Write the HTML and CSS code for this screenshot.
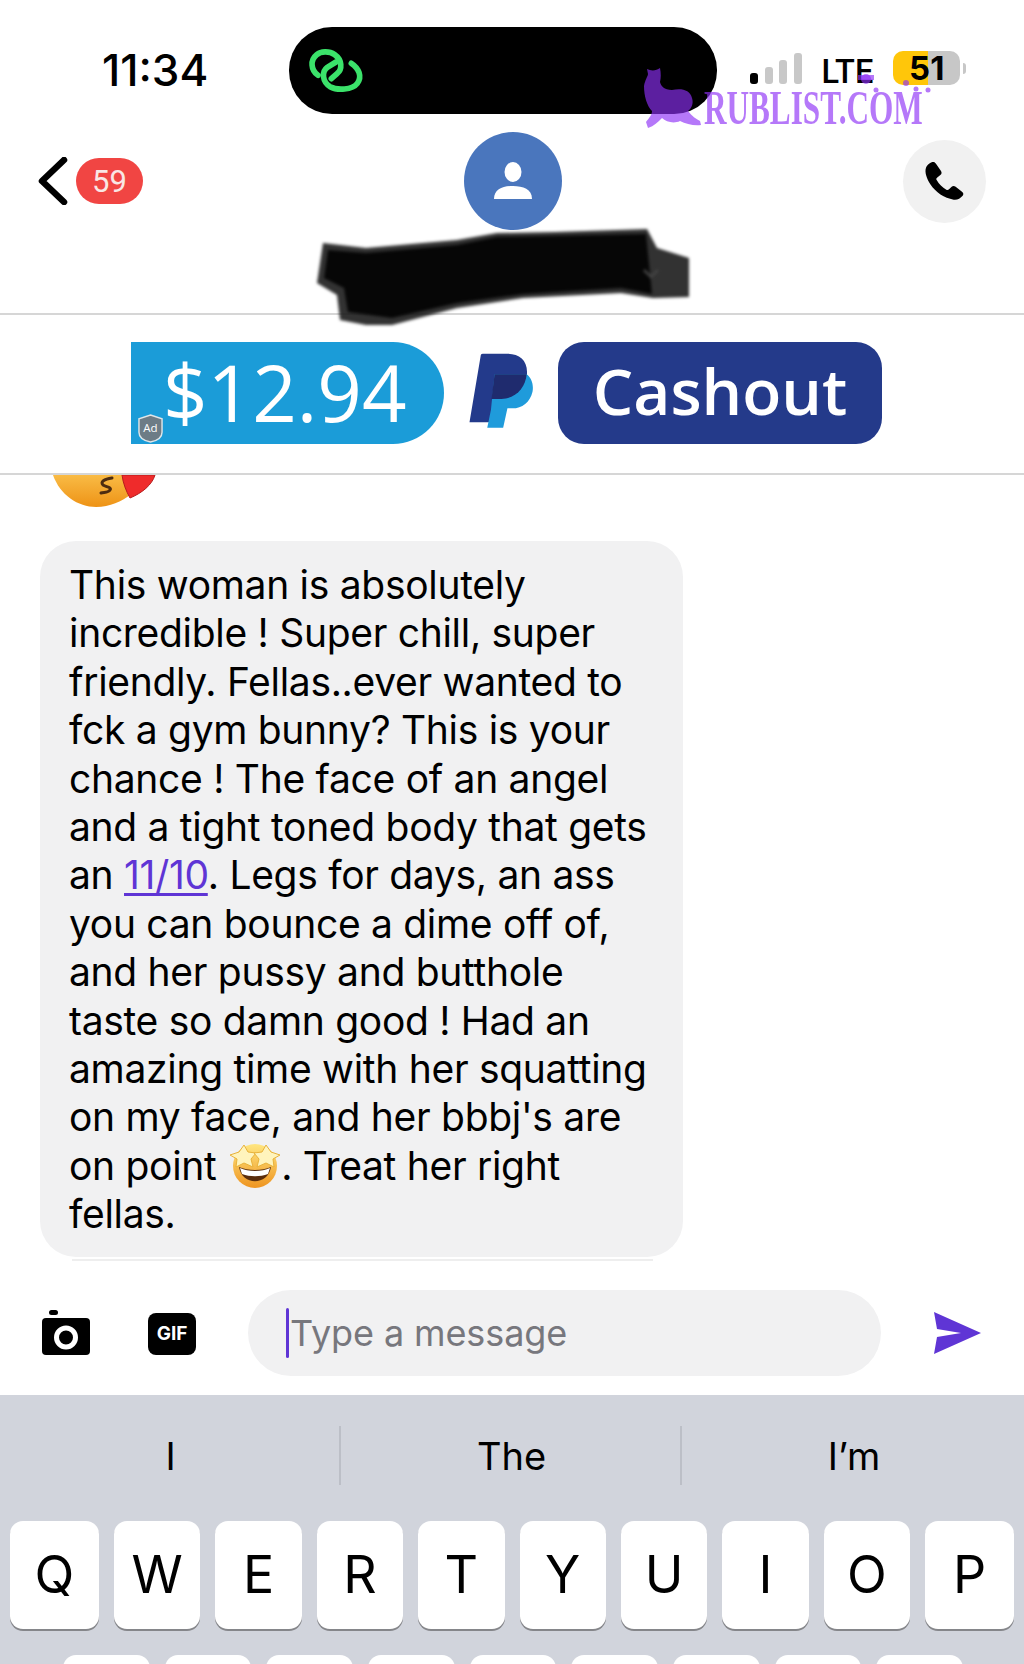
FILE: index.html
```html
<!DOCTYPE html>
<html lang="en">
<head>
    <meta charset="UTF-8">
    <title>Messages</title>
    <link rel="stylesheet" href="styles.css">
</head>
<body>
    <div class="phone">
        <div class="status">
            <div class="time">11:34</div>
            <div class="island">
                <svg class="island-logo" viewBox="0 0 240 180" fill="none" stroke="#3be26a" stroke-width="17" stroke-linecap="round">
                    <path d="M72 106C50 90 48 60 68 44 80 34 105 32 122 44 145 60 145 88 130 100L112 116"/>
                    <path d="M172 70C195 85 205 110 190 130 175 150 130 152 108 140 85 125 82 95 100 82L126 66"/>
                </svg>
            </div>
            <div class="status-right">
                <div class="signal">
                    <span class="bar bar-1"></span>
                    <span class="bar bar-2"></span>
                    <span class="bar bar-3"></span>
                    <span class="bar bar-4"></span>
                </div>
                <div class="lte">LTE</div>
                <div class="battery"><span>51</span></div>
                <div class="battery-nub"></div>
            </div>
        </div>

        <div class="contact">
            <div class="contact-row">
                <div class="back">
                    <svg class="chevron" viewBox="0 0 30 48" fill="none" stroke="#000" stroke-width="6.500" stroke-linecap="round" stroke-linejoin="round">
                        <path d="M26 3 4 24l22 21"/>
                    </svg>
                    <span class="badge">59</span>
                </div>
                <div class="avatar">
                    <svg viewBox="0 0 38 38" width="38" height="38" fill="#fff">
                        <ellipse cx="19" cy="10" rx="8.5" ry="10"/>
                        <path d="M0 37C0 27 9 24 19 24S38 27 38 37Z"/>
                    </svg>
                </div>
                <div class="call">
                    <svg viewBox="0 0 180 156" width="60" height="52" fill="#000">
                        <path d="M33 38C37 28 48 20 56 21 60 22 62 25 64 28L78 48C81 53 80 57 76 60L66 68C64 70 63 72 65 75 72 88 82 97 94 104 97 106 100 105 102 103L110 95C113 92 118 92 122 95L141 110C146 114 146 118 143 122 136 130 126 136 116 134 88 130 62 112 46 88 36 72 28 52 33 38Z"/>
                    </svg>
                </div>
            </div>
        </div>

        <div class="ad">
            <div class="ad-amount">
                $12.94
                <svg class="ad-shield" viewBox="0 0 26 30">
                    <path d="M13 1 25 5V19C25 25 19 28 13 29 7 28 1 25 1 19V5Z" fill="#6d7c86" stroke="#dfe5e8" stroke-width="1.5"/>
                    <text x="13" y="19" text-anchor="middle" class="ad-shield-text">Ad</text>
                </svg>
            </div>
            <svg class="paypal" viewBox="0 0 255 270" preserveAspectRatio="none">
                <path fill="#233a8b" d="M55 30Q56 26 62 26H140C180 26 208 45 206 85 203 130 170 160 122 162H104L88 232H18Z"/>
                <path fill="#1f9bdb" d="M100 88H205C222 100 228 120 224 140 216 172 190 190 158 190H142L128 248H76L88 195Z"/>
                <path fill="#1f2b6e" d="M100 88H205C200 130 170 160 122 162H90Z"/>
            </svg>
            <div class="ad-cashout">Cashout</div>
        </div>

        <div class="thread">
            <svg class="kiss" viewBox="0 0 108 33">
                <defs>
                    <linearGradient id="kiss-face" x1="0" y1="0" x2="0" y2="1">
                        <stop offset="0" stop-color="#f9bb45"/>
                        <stop offset="1" stop-color="#ee9316"/>
                    </linearGradient>
                </defs>
                <path d="M3 0C10 20 28 32 46 32 60 32 72 26 80 20L72 0Z" fill="url(#kiss-face)"/>
                <path d="M62 3C54 4 50 7 53 10 56 12 62 12 60 15 58 18 54 17 51 18" fill="none" stroke="#4d2c10" stroke-width="3" stroke-linecap="round"/>
                <path d="M72 0H105C102 10 92 18 80 23 76 16 73 8 72 0Z" fill="#ef2b2b" stroke="#b51c1c" stroke-width="1"/>
            </svg>
            <div class="bubble">This woman is absolutely<br>incredible ! Super chill, super<br>friendly. Fellas..ever wanted to<br>fck a gym bunny? This is your<br>chance ! The face of an angel<br>and a tight toned body that gets<br>an <a class="link">11/10</a>. Legs for days, an ass<br>you can bounce a dime off of,<br>and her pussy and butthole<br>taste so damn good ! Had an<br>amazing time with her squatting<br>on my face, and her bbbj's are<br>on point <svg class="star-eyes" viewBox="0 0 50 46">
                    <defs>
                        <linearGradient id="star-face" x1="0" y1="0" x2="0" y2="1">
                            <stop offset="0" stop-color="#ffe680"/>
                            <stop offset="1" stop-color="#ee9420"/>
                        </linearGradient>
                    </defs>
                    <circle cx="25" cy="24" r="22" fill="url(#star-face)"/>
                    <path d="M9 25C12 44 38 44 41 25 32 29 18 29 9 25Z" fill="#5a2d0c"/>
                    <path d="M10 26C18 30 32 30 40 26L38 32C30 35 20 35 12 32Z" fill="#fff"/>
                    <path d="M14 3 18 10 26 11 21 17 23 25 14 21 6 25 7 17 0 13 9 10Z" fill="#fff4bd" stroke="#e8b23a"/>
                    <path d="M36 3 41 10 50 13 43 17 44 25 36 21 27 25 29 17 24 11 32 10Z" fill="#fff4bd" stroke="#e8b23a"/>
                </svg>. Treat her right<br>fellas.</div>
            <div class="bubble-edge"></div>
        </div>

        <div class="composer">
            <svg class="camera" viewBox="0 0 48 45">
                <rect x="7" y="0" width="9" height="5" rx="2.500" fill="#000"/>
                <rect x="0" y="8" width="48" height="37" rx="4" fill="#000"/>
                <circle cx="24" cy="27.500" r="9.500" fill="none" stroke="#fff" stroke-width="5"/>
            </svg>
            <div class="gif">GIF</div>
            <div class="input"><span class="caret"></span><span class="placeholder">Type a message</span></div>
            <svg class="send" viewBox="0 0 47 42">
                <path d="M0 0 47 21 0 42 3 25 27 21 3 17Z" fill="#5f35d5"/>
            </svg>
        </div>

        <div class="keyboard">
            <div class="suggestions">
                <div class="suggestion">I</div>
                <div class="suggestion">The</div>
                <div class="suggestion">I’m</div>
            </div>
            <div class="key-row">
                <div class="key key-edge">Q</div>
                <div class="key">W</div>
                <div class="key">E</div>
                <div class="key">R</div>
                <div class="key">T</div>
                <div class="key">Y</div>
                <div class="key">U</div>
                <div class="key">I</div>
                <div class="key">O</div>
                <div class="key key-edge">P</div>
            </div>
            <div class="key-row key-row-2">
                <div class="key"></div>
                <div class="key"></div>
                <div class="key"></div>
                <div class="key"></div>
                <div class="key"></div>
                <div class="key"></div>
                <div class="key"></div>
                <div class="key"></div>
                <div class="key"></div>
            </div>
        </div>

        <!-- scribble over the contact name -->
        <svg class="scribble" viewBox="0 0 380 100">
            <path d="M7 15 50 20 141 12 181 5 239 4 331 1 341 20 373 30 373 69 337 70 305 65 207 70 141 80 76 97 50 97 24 92 21 67 1 55Z" fill="#1c1c1c" opacity=".9"/>
            <path d="M12 22 50 25 141 17 181 9 330 6 336 66 305 60 207 66 141 75 76 90 32 84 28 60 8 50Z" fill="#060606"/>
            <path d="M328 42 335 49 342 42" fill="none" stroke="#444" stroke-width="2.500"/>
        </svg>

        <!-- site watermark -->
        <svg class="wm-horse" viewBox="0 0 290 70">
            <path d="M3 3C7 5 12 5 16 2 17 7 17 12 16 16 17 20 20 24 28 24 38 22 46 24 48 32 50 38 47 43 44 45 48 50 52 53 56 55L57 59C50 60 42 58 36 55 30 58 22 56 18 52 14 56 10 60 4 62L2 56C5 52 8 49 8 45 3 40 0 30 0 20 1 14 4 10 4 8Z"/>
            <circle cx="222" cy="13" r="5"/><path d="M214 9h16v5h-16z"/>
            <circle cx="232" cy="24" r="2.500"/><circle cx="262" cy="17" r="3"/><circle cx="272" cy="23" r="2.500"/><circle cx="284" cy="24" r="2.500"/>
        </svg>
        <div class="wm-text">RUBLIST.COM</div>
    </div>
</body>
</html>
```

FILE: styles.css
```css
* {
    margin: 0;
    padding: 0;
    box-sizing: border-box;
}

body {
    background: #fff;
    color: #000;
    font-family: 'Inter', sans-serif;
}

.phone {
    position: relative;
    width: 1024px;
    height: 1664px;
    overflow: hidden;
    display: flex;
    flex-direction: column;
}

/* status bar */
.status {
    height: 132px;
    flex: none;
    padding-top: 27px;
    display: flex;
    align-items: flex-start;
}

.time {
    width: 289px;
    height: 87px;
    padding-left: 102px;
    line-height: 87px;
    font-size: 44px;
    font-weight: 500;
}

.island {
    width: 428px;
    height: 87px;
    border-radius: 43px;
    background: #000;
    padding: 13px 0 0 5px;
}

.island-logo {
    display: block;
    width: 80px;
    height: 60px;
}

.status-right {
    height: 87px;
    padding-left: 33px;
    display: flex;
    align-items: center;
}

.signal {
    display: flex;
    align-items: flex-end;
    gap: 6.5px;
    height: 31px;
    margin-top: -4px;
}

.bar {
    width: 8px;
    border-radius: 3px;
    background: #c8c8c8;
}

.bar-1 { height: 11px; background: #000; }
.bar-2 { height: 17px; }
.bar-3 { height: 24px; }
.bar-4 { height: 31px; }

.lte {
    margin-left: 20px;
    margin-top: 3px;
    font-family: 'Roboto', sans-serif;
    font-size: 32.5px;
    font-weight: 500;
    line-height: 1;
}

.battery {
    width: 67px;
    height: 34px;
    margin-left: 20px;
    margin-top: -5px;
    border-radius: 10px;
    background: linear-gradient(90deg, #ffc60a 52%, #c7c7c7 52%);
    display: flex;
    align-items: center;
    justify-content: center;
    font-size: 33px;
    font-weight: 700;
}

.battery-nub {
    width: 3px;
    height: 11px;
    margin-left: 3px;
    margin-top: -5px;
    border-radius: 0 3px 3px 0;
    background: #c7c7c7;
}

/* contact header */
.contact {
    height: 183px;
    flex: none;
    border-bottom: 2px solid #d6d6d6;
}

.contact-row {
    display: grid;
    grid-template-columns: 1fr 98px 1fr;
    align-items: center;
    padding: 0 37px 0 39px;
}

.back {
    display: flex;
    align-items: center;
    gap: 8px;
    margin-left: -1px;
}

.chevron {
    width: 30px;
    height: 48px;
}

.badge {
    width: 67px;
    height: 46px;
    border-radius: 23px;
    background: #f14543;
    color: #f9e6e4;
    font-family: 'Roboto', sans-serif;
    font-size: 31px;
    line-height: 48px;
    text-align: center;
}

.avatar {
    width: 98px;
    height: 98px;
    border-radius: 50%;
    background: #4a76bd;
    display: flex;
    align-items: center;
    justify-content: center;
}

.call {
    justify-self: end;
    width: 83px;
    height: 83px;
    margin-right: 1px;
    border-radius: 50%;
    background: #f1f1f1;
    display: flex;
    align-items: center;
    justify-content: center;
}

/* cashout ad */
.ad {
    height: 160px;
    flex: none;
    border-bottom: 2px solid #d6d6d6;
    padding: 27px 0 0 131px;
    display: flex;
    align-items: flex-start;
    font-family: 'Open Sans', sans-serif;
    color: #fff;
}

.ad-amount {
    position: relative;
    width: 313px;
    height: 102px;
    border-radius: 0 51px 51px 0;
    background: #1b9cd8;
    padding-left: 32px;
    font-size: 78px;
    font-weight: 500;
    line-height: 100px;
    white-space: nowrap;
}

.ad-shield {
    position: absolute;
    left: 7px;
    bottom: 1px;
    width: 25px;
    height: 29px;
}

.ad-shield-text {
    font-size: 12px;
    font-weight: 400;
    fill: #fff;
}

.paypal {
    width: 78px;
    height: 90px;
    margin: 3px 0 0 20px;
}

.ad-cashout {
    width: 324px;
    height: 102px;
    margin-left: 16px;
    border-radius: 26px;
    background: #243a8a;
    font-size: 64px;
    font-weight: 600;
    line-height: 98px;
    text-align: center;
}

/* messages */
.thread {
    height: 789px;
    flex: none;
    overflow: hidden;
    padding: 0 0 0 40px;
}

.kiss {
    display: block;
    width: 108px;
    height: 33px;
    margin-left: 10px;
}

.bubble {
    width: 643px;
    height: 716px;
    margin-top: 33px;
    padding: 20px 20px 18px 29px;
    border-radius: 36px;
    background: #f1f1f2;
    font-size: 39px;
    line-height: 48.4px;
    letter-spacing: -0.3px;
    white-space: nowrap;
}

.link {
    color: #5f35d5;
    text-decoration: underline;
    text-underline-offset: 4px;
}

.star-eyes {
    width: 50px;
    height: 46px;
    vertical-align: 4px;
    margin: -12px 1px -12px 3px;
}

.bubble-edge {
    height: 2px;
    width: 581px;
    margin: 2px 0 0 32px;
    background: #eee;
}

/* message box */
.composer {
    height: 131px;
    flex: none;
    display: flex;
    align-items: center;
    padding: 7px 43px 0 42px;
}

.camera {
    width: 48px;
    height: 45px;
    flex: none;
    margin-top: -2px;
}

.gif {
    width: 48px;
    height: 42px;
    flex: none;
    margin-left: 58px;
    margin-top: 2px;
    border-radius: 8px;
    background: #000;
    color: #fff;
    font-size: 19px;
    font-weight: 700;
    line-height: 42px;
    text-align: center;
}

.input {
    width: 633px;
    height: 86px;
    flex: none;
    margin-left: 52px;
    border-radius: 43px;
    background: #f1f1f2;
    padding-left: 38px;
    display: flex;
    align-items: center;
    gap: 1px;
}

.caret {
    width: 3px;
    height: 50px;
    border-radius: 2px;
    background: #5f35d5;
}

.placeholder {
    color: #77777d;
    font-size: 36px;
    letter-spacing: -0.1px;
}

.send {
    width: 47px;
    height: 42px;
    flex: none;
    margin-left: 53px;
}

/* keyboard */
.keyboard {
    flex: 1;
    background: #d1d4dc;
}

.suggestions {
    height: 126px;
    padding-top: 31px;
    display: grid;
    grid-template-columns: 339px 341px 1fr;
    align-items: start;
}

.suggestion {
    height: 59px;
    padding-left: 2px;
    line-height: 61px;
    font-size: 38px;
    text-align: center;
    border-left: 2px solid #bcbfc7;
}

.suggestion:first-child {
    border-left: none;
}

.key-row {
    display: flex;
    gap: 15px;
    padding: 0 10px;
}

.key-row-2 {
    margin-top: 26px;
    padding: 0 61px 0 63px;
}

.key {
    flex: 1;
    height: 108px;
    border-radius: 13px;
    background: #fff;
    box-shadow: 0 2px 0 #85868a;
    font-size: 52px;
    line-height: 108px;
    text-align: center;
}

.key-edge {
    flex: none;
    width: 89px;
}

/* watermark over the top right corner */
.wm-horse {
    position: absolute;
    left: 644px;
    top: 66px;
    width: 290px;
    height: 70px;
    fill: rgba(141, 48, 246, 0.65);
}

.wm-text {
    position: absolute;
    left: 704px;
    top: 90px;
    font-family: 'Liberation Serif', serif;
    font-size: 48px;
    font-weight: 700;
    line-height: 36px;
    color: rgba(141, 48, 246, 0.65);
    white-space: nowrap;
    transform: scaleX(0.65);
    transform-origin: left top;
}

.scribble {
    position: absolute;
    left: 316px;
    top: 228px;
    width: 380px;
    height: 100px;
    filter: blur(1.5px);
}
```
